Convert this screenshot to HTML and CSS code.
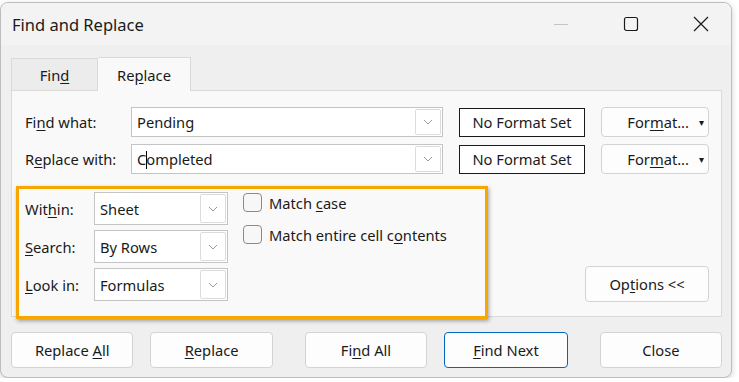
FILE: index.html
```html
<!DOCTYPE html>
<html lang="en">
<head>
    <meta charset="UTF-8">
    <title>Find and Replace</title>
    <link rel="stylesheet" href="styles.css">
</head>
<body>
    <div class="window">
        <!-- タイトルバー -->
        <div class="titlebar">
            <span class="title">Find and Replace</span>
            <div class="controls">
                <span class="ctl">
                    <svg width="16" height="16" viewBox="0 0 16 16"><path d="M1 8.5h14" stroke="#c4c4c4" stroke-width="1"/></svg>
                </span>
                <span class="ctl">
                    <svg width="16" height="16" viewBox="0 0 16 16"><rect x="1.5" y="1.5" width="13" height="13" rx="2" fill="none" stroke="#1a1a1a" stroke-width="1.2"/></svg>
                </span>
                <span class="ctl">
                    <svg width="16" height="16" viewBox="0 0 16 16"><path d="M1 1l14 14M15 1L1 15" stroke="#1a1a1a" stroke-width="1.2"/></svg>
                </span>
            </div>
        </div>

        <div class="body">
            <div class="tabs">
                <div class="tab"><span>Fin<u>d</u></span></div>
                <div class="tab active"><span>Re<u>p</u>lace</span></div>
            </div>

            <div class="panel">
                <div class="find-grid">
                    <span class="label">Fi<u>n</u>d what:</span>
                    <div class="combo">
                        <span class="value">Pending</span>
                        <span class="drop"><svg width="10" height="6" viewBox="0 0 10 6"><path d="M1 1l4 4 4-4" fill="none" stroke="#9a9a9a" stroke-width="1"/></svg></span>
                    </div>
                    <div class="fmt-box">No Format Set</div>
                    <div class="btn fmt-btn"><span>For<u>m</u>at...</span><span class="tri">&#9662;</span></div>

                    <span class="label">R<u>e</u>place with:</span>
                    <div class="combo">
                        <span class="value">C<span class="caret"></span>ompleted</span>
                        <span class="drop"><svg width="10" height="6" viewBox="0 0 10 6"><path d="M1 1l4 4 4-4" fill="none" stroke="#9a9a9a" stroke-width="1"/></svg></span>
                    </div>
                    <div class="fmt-box">No Format Set</div>
                    <div class="btn fmt-btn"><span>For<u>m</u>at...</span><span class="tri">&#9662;</span></div>
                </div>

                <div class="options">
                    <div class="selects">
                        <span class="label">Wit<u>h</u>in:</span>
                        <div class="combo">
                            <span class="value">Sheet</span>
                            <span class="drop"><svg width="10" height="6" viewBox="0 0 10 6"><path d="M1 1l4 4 4-4" fill="none" stroke="#9a9a9a" stroke-width="1"/></svg></span>
                        </div>
                        <span class="label"><u>S</u>earch:</span>
                        <div class="combo">
                            <span class="value">By Rows</span>
                            <span class="drop"><svg width="10" height="6" viewBox="0 0 10 6"><path d="M1 1l4 4 4-4" fill="none" stroke="#9a9a9a" stroke-width="1"/></svg></span>
                        </div>
                        <span class="label"><u>L</u>ook in:</span>
                        <div class="combo">
                            <span class="value">Formulas</span>
                            <span class="drop"><svg width="10" height="6" viewBox="0 0 10 6"><path d="M1 1l4 4 4-4" fill="none" stroke="#9a9a9a" stroke-width="1"/></svg></span>
                        </div>
                    </div>

                    <div class="checks">
                        <div class="check"><span class="box"></span><span>Match <u>c</u>ase</span></div>
                        <div class="check"><span class="box"></span><span>Match entire cell c<u>o</u>ntents</span></div>
                    </div>

                    <div class="btn opt-btn"><span>Op<u>t</u>ions &lt;&lt;</span></div>
                </div>
            </div>

            <!-- 下部ボタン -->
            <div class="actions">
                <div class="btn action"><span>Replace <u>A</u>ll</span></div>
                <div class="btn action"><span><u>R</u>eplace</span></div>
                <div class="btn action gap-lg"><span>Fi<u>n</u>d All</span></div>
                <div class="btn action default"><span><u>F</u>ind Next</span></div>
                <div class="btn action gap-lg"><span>Close</span></div>
            </div>
        </div>

        <div class="highlight"></div>
    </div>
</body>
</html>
```

FILE: styles.css
```css
body {
    margin: 0;
    background: #ffffff;
    font-family: "Noto Sans", "Liberation Sans", sans-serif;
    font-size: 14.7px;
    color: #1a1a1a;
}

u {
    text-underline-offset: 2px;
}

.window {
    position: relative;
    box-sizing: border-box;
    width: 732px;
    height: 376px;
    margin-top: 2px;
    background: #efefef;
    border: 1px solid #bdbdbd;
    border-radius: 8px;
    box-shadow: 0 2px 6px rgba(0,0,0,0.18);
    overflow: hidden;
}

.titlebar {
    height: 42px;
    display: flex;
    align-items: center;
    padding-left: 11px;
    background: #f3f3f3;
}

.title {
    font-size: 16.5px;
    flex: 1;
}

.controls {
    display: flex;
    gap: 54px;
    margin-right: 22px;
}

.ctl {
    width: 16px;
    height: 16px;
    display: flex;
}

.body {
    padding: 12px 9px 9px 10px;
}

.tabs {
    display: flex;
    height: 33px;
    align-items: flex-end;
}

.tab {
    box-sizing: border-box;
    height: 32px;
    width: 87px;
    display: flex;
    align-items: center;
    justify-content: center;
    background: #ececec;
    border: 1px solid #dadada;
    border-bottom: none;
}

.tab.active {
    width: 93px;
    height: 34px;
    margin-bottom: -1px;
    position: relative;
    z-index: 1;
    background: #f9f9f9;
    border-left: none;
}

.panel {
    height: 227px;
    box-sizing: border-box;
    padding: 16px 12px 13px 13px;
    background: #f9f9f9;
    border: 1px solid #dadada;
}

.find-grid {
    display: grid;
    grid-template-columns: 106px 312px 142px 124px;
    grid-template-rows: 30px 30px;
    row-gap: 7px;
    align-items: center;
}

.combo {
    box-sizing: border-box;
    height: 100%;
    display: flex;
    align-items: center;
    background: #ffffff;
    border: 1px solid #c4c4c4;
    padding: 1px;
}

.combo .value {
    flex: 1;
    padding-left: 4px;
}

.drop {
    box-sizing: border-box;
    width: 26px;
    height: 100%;
    display: flex;
    align-items: center;
    justify-content: center;
    border: 1px solid #dcdcdc;
    border-radius: 2px;
}

.caret {
    display: inline-block;
    width: 1px;
    height: 18px;
    background: #000;
    vertical-align: -4px;
    margin-right: -1px;
}

.fmt-box {
    box-sizing: border-box;
    height: 29px;
    margin-left: 16px;
    display: flex;
    align-items: center;
    justify-content: center;
    background: #ffffff;
    border: 1px solid #1a1a1a;
}

.btn {
    box-sizing: border-box;
    display: flex;
    align-items: center;
    justify-content: center;
    background: #fdfdfd;
    border: 1px solid #d3d3d3;
    border-radius: 4px;
}

.fmt-btn {
    height: 30px;
    margin-left: 16px;
    justify-content: flex-end;
    padding-right: 4px;
}

.tri {
    font-size: 10px;
    margin-left: 10px;
}

.options {
    display: flex;
    margin-top: 18px;
    height: 111px;
}

.selects {
    display: grid;
    grid-template-columns: 69px 134px;
    grid-template-rows: 33px 33px 33px;
    row-gap: 5px;
    align-items: center;
}

.checks {
    margin-left: 15px;
    display: flex;
    flex-direction: column;
    gap: 13px;
    padding-top: 1px;
}

.check {
    display: flex;
    align-items: center;
    gap: 7px;
    height: 19px;
}

.box {
    box-sizing: border-box;
    width: 19px;
    height: 19px;
    border: 1px solid #8a8a8a;
    border-radius: 4px;
    background: #f7f7f7;
}

.opt-btn {
    margin-left: auto;
    align-self: flex-end;
    width: 124px;
    height: 36px;
    margin-bottom: 1px;
}

.actions {
    display: flex;
    margin-top: 15px;
}

.action {
    width: 123px;
    height: 36px;
    margin-left: 17px;
}

.action:first-child {
    margin-left: 0;
}

.action.gap-lg {
    margin-left: 32px;
}

.action.default {
    width: 124px;
    border-color: #0067c0;
}

.highlight {
    position: absolute;
    left: 15px;
    top: 183px;
    width: 472px;
    height: 133px;
    box-sizing: border-box;
    border: 3px solid #f7a700;
    box-shadow: 1px 2px 4px rgba(0,0,0,0.35);
}
```
